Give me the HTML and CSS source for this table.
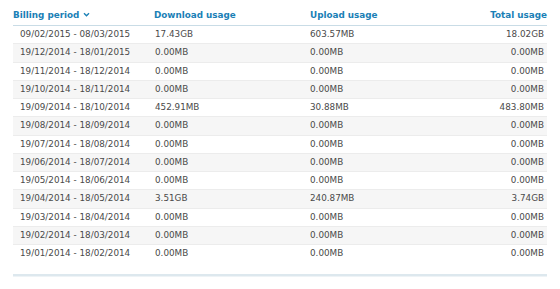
FILE: index.html
```html
<!DOCTYPE html>
<html>
<head>
<meta charset="utf-8">
<link rel="stylesheet" href="styles.css">
</head>
<body>
<table class="usage">
  <colgroup>
    <col class="c1"><col class="c2"><col class="c3"><col class="c4">
  </colgroup>
  <thead>
    <tr>
      <th>Billing period <svg class="chev" width="7" height="5" viewBox="0 0 7 5"><path d="M1 1.2 L3.5 3.7 L6 1.2" fill="none" stroke="#1a80b6" stroke-width="1.4"/></svg></th>
      <th>Download usage</th>
      <th>Upload usage</th>
      <th class="r">Total usage</th>
    </tr>
  </thead>
  <tbody>
    <tr><td>09/02/2015 - 08/03/2015</td><td>17.43GB</td><td>603.57MB</td><td class="r">18.02GB</td></tr>
    <tr><td>19/12/2014 - 18/01/2015</td><td>0.00MB</td><td>0.00MB</td><td class="r">0.00MB</td></tr>
    <tr><td>19/11/2014 - 18/12/2014</td><td>0.00MB</td><td>0.00MB</td><td class="r">0.00MB</td></tr>
    <tr><td>19/10/2014 - 18/11/2014</td><td>0.00MB</td><td>0.00MB</td><td class="r">0.00MB</td></tr>
    <tr><td>19/09/2014 - 18/10/2014</td><td>452.91MB</td><td>30.88MB</td><td class="r">483.80MB</td></tr>
    <tr><td>19/08/2014 - 18/09/2014</td><td>0.00MB</td><td>0.00MB</td><td class="r">0.00MB</td></tr>
    <tr><td>19/07/2014 - 18/08/2014</td><td>0.00MB</td><td>0.00MB</td><td class="r">0.00MB</td></tr>
    <tr><td>19/06/2014 - 18/07/2014</td><td>0.00MB</td><td>0.00MB</td><td class="r">0.00MB</td></tr>
    <tr><td>19/05/2014 - 18/06/2014</td><td>0.00MB</td><td>0.00MB</td><td class="r">0.00MB</td></tr>
    <tr><td>19/04/2014 - 18/05/2014</td><td>3.51GB</td><td>240.87MB</td><td class="r">3.74GB</td></tr>
    <tr><td>19/03/2014 - 18/04/2014</td><td>0.00MB</td><td>0.00MB</td><td class="r">0.00MB</td></tr>
    <tr><td>19/02/2014 - 18/03/2014</td><td>0.00MB</td><td>0.00MB</td><td class="r">0.00MB</td></tr>
    <tr><td>19/01/2014 - 18/02/2014</td><td>0.00MB</td><td>0.00MB</td><td class="r">0.00MB</td></tr>
  </tbody>
</table>
<div class="foot"></div>
</body>
</html>
```
FILE: styles.css
```css
html, body {
  margin: 0;
  padding: 0;
  background: #fff;
}
body {
  padding: 5px 13px 0 13px;
  font-family: "DejaVu Sans", Verdana, sans-serif;
  font-size: 8.8px;
  color: #4a4a4a;
}
.usage {
  width: 534px;
  border-collapse: collapse;
  table-layout: fixed;
}
.c1 { width: 141px; }
.c2 { width: 156px; }
.c3 { width: 140px; }
.usage th {
  text-align: left;
  color: #1a80b6;
  font-weight: bold;
  padding: 5px 0 4px 0;
  height: 11px;
  border-bottom: 1px solid #c9dce6;
  line-height: 11px;
  white-space: nowrap;
}
.usage th.r { text-align: right; }
.chev { vertical-align: 1px; margin-left: 1px; }
.usage td {
  height: 18.25px;
  padding: 0;
  line-height: 11px;
  box-sizing: border-box;
  border-bottom: 1px solid #ececec;
  white-space: nowrap;
}
.usage td:first-child { padding-left: 7px; }
.usage td:nth-child(2) { padding-left: 1px; }
.usage td.r { text-align: right; padding-right: 3px; }
.usage tbody tr:nth-child(even) td { background: #f6f6f6; }
.usage tbody tr:last-child td { border-bottom: none; }
.foot {
  margin-top: 11px;
  width: 534px;
  height: 0;
  border-top: 2px solid #dde8ee;
  border-bottom: 1px solid #eef3f6;
}
```
